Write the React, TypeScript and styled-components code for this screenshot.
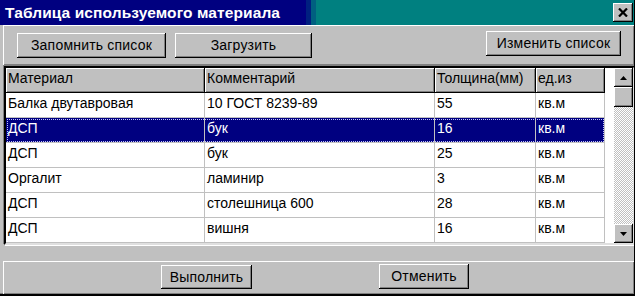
import React from "react";
import styled, { createGlobalStyle } from "styled-components";

const Global = createGlobalStyle`
  html, body { margin: 0; padding: 0; background: #ffffff; }
  body { font-family: "Liberation Sans", Arial, sans-serif; }
  * { box-sizing: border-box; }
`;

const Window = styled.div`
  width: 635px;
  height: 296px;
  background: #c0c0c0;
  border-right: 1px solid #000;
  border-bottom: 2px solid #000;
  box-shadow: inset 0 -1px #808080;
  display: flex;
  flex-direction: column;
  overflow: hidden;
`;

const TitleBar = styled.div`
  height: 25px;
  flex: none;
  display: flex;
  align-items: center;
  justify-content: space-between;
  padding: 0 1px 0 5px;
  background: linear-gradient(
    90deg,
    #000080 0 306px,
    #002080 306px 311px,
    #006080 311px 316px,
    #008080 316px
  );
`;

const TitleText = styled.span`
  color: #fff;
  font-weight: bold;
  font-size: 15.5px;
  letter-spacing: 0.1px;
  white-space: nowrap;
`;

const CloseButton = styled.div`
  width: 20px;
  height: 19px;
  background: #c0c0c0;
  box-shadow: inset -1px -1px #000, inset 1px 1px #fff, inset -2px -2px #808080;
  display: flex;
  align-items: center;
  justify-content: center;
`;

const Body = styled.div`
  flex: 1;
  display: flex;
  flex-direction: column;
  padding: 0 0 0 3px;
`;

const Panel = styled.div<{ $h: number; $pl: number; $gap: number }>`
  height: ${(p) => p.$h}px;
  width: 631px;
  flex: none;
  display: flex;
  align-items: flex-start;
  gap: ${(p) => p.$gap}px;
  padding: 0 13px 0 ${(p) => p.$pl}px;
  box-shadow: inset 1px 1px #fff, inset -1px -1px #808080;
`;

const Spacer = styled.div`
  height: 16px;
  flex: none;
`;

const Button = styled.div<{ $w: number; $h?: number; $top: number; $push?: boolean }>`
  width: ${(p) => p.$w}px;
  height: ${(p) => p.$h ?? 25}px;
  margin-top: ${(p) => p.$top}px;
  margin-left: ${(p) => (p.$push ? "auto" : "0")};
  background: #c0c0c0;
  box-shadow: inset -1px -1px #000, inset 1px 1px #fff, inset -2px -2px #808080;
  display: flex;
  align-items: center;
  justify-content: center;
  font-size: 14px;
  letter-spacing: 0.2px;
  color: #000;
  white-space: nowrap;
  padding-bottom: 1px;
`;

const Grid = styled.div`
  margin-top: 1px;
  width: 631px;
  height: 179px;
  flex: none;
  border-style: solid;
  border-width: 2px;
  border-color: #000 #dfdfdf #dfdfdf #000;
  box-shadow: -1px -1px #808080, 1px 1px #fff;
  margin-left: 1px;
  background: #fff;
  display: flex;
`;

const Table = styled.div`
  flex: 1;
  display: flex;
  flex-direction: column;
`;

const HeaderRow = styled.div`
  display: flex;
  height: 25px;
`;

const HeaderCell = styled.div<{ $w: number }>`
  width: ${(p) => p.$w + 1}px;
  height: 25px;
  padding: 0 2px;
  background: #c0c0c0;
  border-right: 1px solid #000;
  border-bottom: 1px solid #000;
  box-shadow: inset 1px 1px #fff, inset -1px -1px #808080;
  font-size: 14px;
  line-height: 20px;
  color: #000;
  white-space: nowrap;
  overflow: hidden;
`;

const Row = styled.div<{ $selected?: boolean }>`
  display: flex;
  height: 25px;
  width: 599px;
  ${(p) =>
    p.$selected &&
    `
    outline: 1px dotted #c0c0ff;
    outline-offset: -2px;
  `}
`;

const Cell = styled.div<{ $w: number; $selected?: boolean }>`
  width: ${(p) => p.$w + 1}px;
  height: 25px;
  padding: 0 2px;
  background: ${(p) => (p.$selected ? "#000080" : "#fff")};
  color: ${(p) => (p.$selected ? "#fff" : "#000")};
  border-right: 1px solid #c0c0c0;
  border-bottom: 1px solid #c0c0c0;
  font-size: 14px;
  line-height: 20px;
  white-space: nowrap;
  overflow: hidden;
`;

const Scrollbar = styled.div`
  width: 19px;
  flex: none;
  display: flex;
  flex-direction: column;
  background: repeating-conic-gradient(#c0c0c0 0 25%, #fff 0 50%) 0 0 / 2px 2px;
`;

const ScrollBox = styled.div<{ $h: number }>`
  height: ${(p) => p.$h}px;
  flex: none;
  background: #c0c0c0;
  box-shadow: inset -1px -1px #000, inset 1px 1px #fff, inset -2px -2px #808080;
  display: flex;
  align-items: center;
  justify-content: center;
`;

const Track = styled.div`
  flex: 1;
`;

const cols = [198, 229, 100, 68];
const headers = ["Материал", "Комментарий", "Толщина(мм)", "ед.из"];
const rows: string[][] = [
  ["Балка двутавровая", "10 ГОСТ 8239-89", "55", "кв.м"],
  ["ДСП", "бук", "16", "кв.м"],
  ["ДСП", "бук", "25", "кв.м"],
  ["Оргалит", "ламинир", "3", "кв.м"],
  ["ДСП", "столешница 600", "28", "кв.м"],
  ["ДСП", "вишня", "16", "кв.м"],
];

const Arrow = ({ up }: { up?: boolean }) => (
  <svg width="7" height="4" viewBox="0 0 7 4">
    <path d={up ? "M3.5 0 L7 4 L0 4 Z" : "M0 0 L7 0 L3.5 4 Z"} fill="#000" />
  </svg>
);

export default function App() {
  return (
    <>
      <Global />
      <Window>
        <TitleBar>
          <TitleText>Таблица используемого материала</TitleText>
          <CloseButton>
            <svg width="10" height="9" viewBox="0 0 10 9">
              <path d="M1 0.5 L9 8.5 M9 0.5 L1 8.5" stroke="#000" strokeWidth="2.2" />
            </svg>
          </CloseButton>
        </TitleBar>
        <Body>
          <Panel $h={40} $pl={14} $gap={9}>
            <Button $w={149} $top={8}>Запомнить список</Button>
            <Button $w={137} $top={8}>Загрузить</Button>
            <Button $w={135} $top={6} $push>Изменить список</Button>
          </Panel>
          <Grid>
            <Table>
              <HeaderRow>
                {headers.map((h, i) => (
                  <HeaderCell key={h} $w={cols[i]}>{h}</HeaderCell>
                ))}
              </HeaderRow>
              {rows.map((r, ri) => (
                <Row key={ri} $selected={ri === 1}>
                  {r.map((c, ci) => (
                    <Cell key={ci} $w={cols[ci]} $selected={ri === 1}>{c}</Cell>
                  ))}
                </Row>
              ))}
            </Table>
            <Scrollbar>
              <ScrollBox $h={19}><Arrow up /></ScrollBox>
              <ScrollBox $h={20} />
              <Track />
              <ScrollBox $h={19}><Arrow /></ScrollBox>
            </Scrollbar>
          </Grid>
          <Spacer />
          <Panel $h={33} $pl={158} $gap={127}>
            <Button $w={91} $h={24} $top={4}>Выполнить</Button>
            <Button $w={90} $h={25} $top={3}>Отменить</Button>
          </Panel>
        </Body>
      </Window>
    </>
  );
}
